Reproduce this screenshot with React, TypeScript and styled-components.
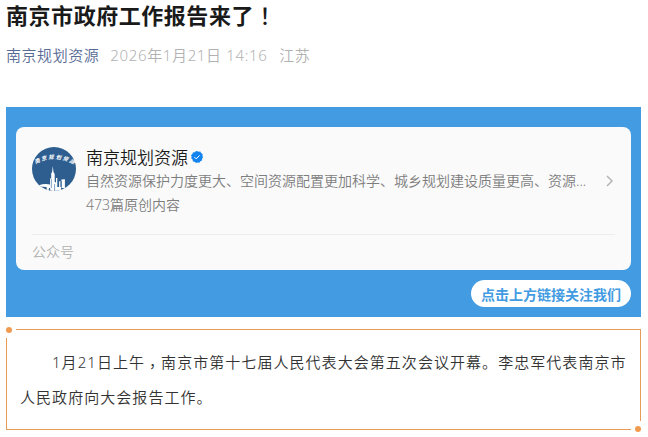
import React, { FC } from "react";
import styled, { createGlobalStyle } from "styled-components";

const App: FC = () => {
  return (
    <>
      <GlobalStyle />
      <StyledArticle>
        <StyledTitle>
          南京市政府工作报告来了<StyledMark>！</StyledMark>
        </StyledTitle>
        <StyledMeta>
          <StyledAuthor href="#">南京规划资源</StyledAuthor>
          <StyledDate>2026年1月21日 14:16</StyledDate>
          <span>江苏</span>
        </StyledMeta>

        <StyledBanner>
          <ProfileCard />
          <StyledPill>点击上方链接关注我们</StyledPill>
        </StyledBanner>

        <StyledFrame>
          <StyledCorner $place="start" />
          <StyledParagraph>
            1月21日上午<StyledComma>，</StyledComma>南京市第十七届人民代表大会第五次会议开幕。李忠军代表南京市人民政府向大会报告工作。
          </StyledParagraph>
          <StyledCorner $place="end" />
        </StyledFrame>
      </StyledArticle>
    </>
  );
};

export default App;

const ProfileCard: FC = () => {
  return (
    <StyledCard>
      <StyledProfile>
        <Avatar />
        <StyledProfileBody>
          <StyledName>
            南京规划资源
            <VerifiedIcon />
          </StyledName>
          <StyledDescription>
            自然资源保护力度更大、空间资源配置更加科学、城乡规划建设质量更高、资源...
          </StyledDescription>
          <StyledCount>473篇原创内容</StyledCount>
        </StyledProfileBody>
        <ChevronIcon />
      </StyledProfile>
      <StyledCardFooter>公众号</StyledCardFooter>
    </StyledCard>
  );
};

const Avatar: FC = () => (
  <StyledAvatar viewBox="0 0 44 44">
    <defs>
      <clipPath id="avatar-clip">
        <circle cx="22" cy="22" r="22" />
      </clipPath>
      <path id="avatar-arc" d="M3.500 17 Q23 6.500 42.500 18" />
    </defs>
    <g clipPath="url(#avatar-clip)">
      <rect width="44" height="44" fill="#2e5e8f" />
      {/* skyline */}
      <path
        fill="#fff"
        d="M7 38.200q5-1.700 11-.8v-6h1.200v-5l.9-1.500.7-6 .7 6 1.200 2v8l1.300.5v-4.400h1.300v9h1.800v-5.500l1.300-.6V40h1v-7.500l3.500-.3V41H29v3H18.500l-.5-3h-1l-.5 3H15l-.5-4-7-.6z"
      />
      <path stroke="#2e5e8f" strokeWidth="0.600" d="M19.300 32v9M22.600 37v7M29.500 34v7" />
    </g>
    <text fill="#fff" fontSize="5.400" fontStyle="italic" fontWeight="700">
      <textPath href="#avatar-arc" textLength="40">
        南京规划资源
      </textPath>
    </text>
  </StyledAvatar>
);

const VerifiedIcon: FC = () => (
  <StyledVerified width="12" height="12" viewBox="0 0 12 12">
    <path
      fill="#1485ee"
      d="M6 0l1.500.7 1.800-.1.800 1.500 1.500 1-.1 1.700L12 6.300l-.9 1.400-.1 1.800-1.600.8L8.300 11.700l-1.800-.2L5 12l-1.300-1.200-1.800-.4-.3-1.800L.3 7.400.6 5.700 0 4.200l1.400-1.100.5-1.700 1.800-.1L4.700.2z"
    />
    <path fill="none" stroke="#fff" strokeWidth="1" d="M3.400 6.100l1.800 1.800 3.400-3.500" />
  </StyledVerified>
);

const ChevronIcon: FC = () => (
  <StyledChevron width="8" height="12" viewBox="0 0 8 12">
    <path fill="none" stroke="#b0b0b0" strokeWidth="1.400" d="M1 1l5 5-5 5" />
  </StyledChevron>
);

const GlobalStyle = createGlobalStyle`
  * {
    box-sizing: border-box;
  }
  body {
    margin: 0;
    background: #fff;
    font-family: "Noto Sans", "Noto Sans CJK SC", sans-serif;
    font-weight: 350;
  }
`;

const StyledArticle = styled.article`
  width: 635px;
  margin-left: 6px;
  padding-bottom: 7px;
`;
const StyledTitle = styled.h1`
  height: 30px;
  margin: 0;
  color: #1a1a1a;
  font-size: 22px;
  font-weight: 700;
  line-height: 28px;
  letter-spacing: 0.544px;
`;
const StyledMark = styled.span`
  font-family: "Noto Sans CJK TC", sans-serif;
  font-weight: 500;
`;
const StyledMeta = styled.div`
  display: flex;
  gap: 10px;
  height: 20px;
  margin-top: 15px;
  color: #b2b2b2;
  font-size: 15px;
  line-height: 20px;
  letter-spacing: 0.544px;
  white-space: nowrap;
`;
const StyledAuthor = styled.a`
  color: #576b95;
  text-decoration: none;
`;
const StyledDate = styled.span`
  width: 160px;
  padding-left: 1px;
  letter-spacing: 0.65px;
`;
const StyledBanner = styled.section`
  display: flex;
  flex-direction: column;
  align-items: flex-end;
  height: 210px;
  margin-top: 42px;
  padding: 20px 10px 10px;
  background: #439be2;
`;
const StyledCard = styled.div`
  width: 100%;
  height: 143px;
  padding: 20px 16px 0;
  border-radius: 8px;
  background: #fafafa;
`;
const StyledProfile = styled.div`
  display: flex;
  height: 87px;
`;
const StyledAvatar = styled.svg`
  flex: none;
  width: 44px;
  height: 44px;
  margin-right: 10px;
`;
const StyledProfileBody = styled.div`
  width: 508px;
`;
const StyledName = styled.div`
  display: flex;
  align-items: center;
  gap: 3px;
  height: 22px;
  color: #1a1a1a;
  font-size: 17px;
  line-height: 22px;
`;
const StyledVerified = styled.svg`
  margin-bottom: 2px;
`;
const StyledDescription = styled.div`
  height: 24px;
  color: #7d7d7d;
  font-size: 14px;
  line-height: 24px;
  white-space: nowrap;
`;
const StyledCount = styled.div`
  color: #7d7d7d;
  font-size: 14px;
  line-height: 24px;
`;
const StyledChevron = styled.svg`
  margin: 28px 1px 0 auto;
`;
const StyledCardFooter = styled.div`
  border-top: 1px solid #ededed;
  color: #b2b2b2;
  font-size: 14px;
  line-height: 34px;
`;
const StyledPill = styled.div`
  height: 27px;
  margin-top: 10px;
  padding: 0 10px;
  border-radius: 14px;
  background: #fff;
  color: #439be2;
  font-size: 14px;
  font-weight: 700;
  line-height: 29px;
`;
const StyledFrame = styled.section`
  position: relative;
  height: 101px;
  margin-top: 12px;
  padding: 15px 13px;
  border: 1px solid #e89a58;
`;
const StyledParagraph = styled.p`
  margin: 0 -2px 0 0;
  color: #333;
  font-size: 15px;
  line-height: 35px;
  letter-spacing: 1.05px;
  text-indent: 32px;
  word-break: break-all;
`;
/* centred comma, lowered to the baseline */
const StyledComma = styled.span`
  font-family: "Noto Sans CJK TC", sans-serif;
  line-height: 1;
  vertical-align: -4px;
`;
/* white patch over the frame corner with a dot in it */
const StyledCorner = styled.span<{ $place: "start" | "end" }>`
  position: absolute;
  ${({ $place }) => ($place === "start" ? "top: -3px; left: -1px;" : "right: -1px; bottom: -3px;")}
  display: flex;
  align-items: ${({ $place }) => `flex-${$place}`};
  justify-content: ${({ $place }) => `flex-${$place}`};
  width: 10px;
  height: 11px;
  background: #fff;

  &::before {
    content: "";
    width: 6px;
    height: 6px;
    border-radius: 50%;
    background: #f09a50;
  }
`;
